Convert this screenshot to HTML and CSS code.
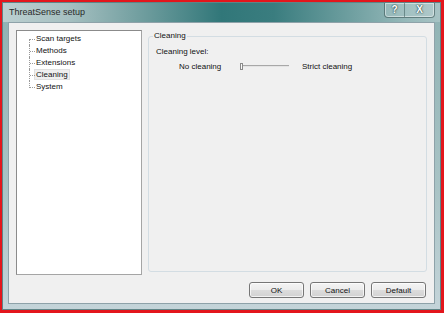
FILE: index.html
```html
<!DOCTYPE html>
<html lang="en">
<head>
    <meta charset="UTF-8">
    <title>ThreatSense setup</title>
    <link rel="stylesheet" href="styles.css">
</head>
<body>
    <div class="window">
        <div class="titlebar">
            <span class="title">ThreatSense setup</span>
            <div class="caption-btns">
                <span class="cap-btn help">?</span>
                <span class="cap-btn close">X</span>
            </div>
        </div>

        <div class="client">
            <div class="main">
                <div class="tree">
                    <ul>
                        <li>Scan targets</li>
                        <li>Methods</li>
                        <li>Extensions</li>
                        <li><span class="selected">Cleaning</span></li>
                        <li>System</li>
                    </ul>
                </div>

                <fieldset class="group">
                    <legend>Cleaning</legend>
                    <div class="field-label">Cleaning level:</div>
                    <div class="slider-row">
                        <span class="slider-min">No cleaning</span>
                        <div class="slider">
                            <span class="thumb"></span>
                            <span class="track"></span>
                        </div>
                        <span class="slider-max">Strict cleaning</span>
                    </div>
                </fieldset>
            </div>

            <div class="buttons">
                <button class="btn">OK</button>
                <button class="btn">Cancel</button>
                <button class="btn">Default</button>
            </div>
        </div>
    </div>
</body>
</html>
```

FILE: styles.css
```css
* {
    margin: 0;
    padding: 0;
    box-sizing: border-box;
    font-family: 'Liberation Sans', Arial, sans-serif;
}

body {
    background: #e3161c;
    width: 444px;
    height: 313px;
    padding: 2px 3px 3px 2px;
    overflow: hidden;
}

.window {
    width: 439px;
    height: 308px;
    display: flex;
    flex-direction: column;
    background: linear-gradient(180deg, #8fb2b3 0%, #a9c3c5 60%, #c4d4d9 100%);
    border: 1px solid #5f8486;
}

.titlebar {
    height: 19px;
    display: flex;
    align-items: flex-start;
    justify-content: space-between;
    padding-left: 6px;
    background: linear-gradient(90deg, #bccfd0 0%, #a6c0c1 15%, #6f9d9e 32%, #317779 50%, #3a7d7f 62%, #6a9c9d 78%, #95b8b9 92%, #a7c3c4 100%);
}

.title {
    font-size: 9px;
    line-height: 19px;
    color: #2a2a2a;
}

.caption-btns {
    display: flex;
    margin-right: 5px;
    border: 1px solid rgba(40, 70, 70, 0.55);
    border-top: none;
    border-radius: 0 0 4px 4px;
    box-shadow: inset 0 0 0 1px rgba(255, 255, 255, 0.45);
    background: rgba(255, 255, 255, 0.12);
}

.cap-btn {
    height: 14px;
    line-height: 13px;
    text-align: center;
    color: #fff;
    font-size: 10px;
    font-weight: bold;
    text-shadow: 0 0 2px #1d3d3e, 0 0 1px #1d3d3e;
}

.help {
    width: 20px;
    border-right: 1px solid rgba(40, 70, 70, 0.45);
}

.close {
    width: 29px;
}

.client {
    flex: 1;
    margin: 0 5px 5px 5px;
    background: #f0f0f0;
    border: 1px solid #8ea2a9;
    padding: 7px 7px 0 7px;
    display: flex;
    flex-direction: column;
}

.main {
    display: flex;
    gap: 6px;
    height: 245px;
}

.tree {
    width: 126px;
    background: #fff;
    border: 1px solid #a5a5a5;
    border-top-color: #8b8b8b;
    border-left-color: #8b8b8b;
    padding-top: 2px;
}

.tree ul {
    list-style: none;
    padding-left: 12px;
}

.tree li {
    position: relative;
    height: 12px;
    line-height: 12px;
    padding-left: 7px;
    font-size: 8px;
    color: #111;
}

.tree li::before {
    content: '';
    position: absolute;
    left: 0;
    top: 0;
    height: 12px;
    border-left: 1px dotted #9a9a9a;
}

.tree li:first-child::before {
    top: 6px;
    height: 6px;
}

.tree li:last-child::before {
    height: 7px;
}

.tree li::after {
    content: '';
    position: absolute;
    left: 1px;
    top: 6px;
    width: 5px;
    border-top: 1px dotted #9a9a9a;
}

.selected {
    display: inline-block;
    height: 11px;
    line-height: 10px;
    padding: 0 1px;
    margin-left: -2px;
    background: #efefef;
    border: 1px solid #e0e0e0;
}

.group {
    flex: 1;
    margin: 1px 0 3px 0;
    border: 1px solid #d3dde3;
    border-radius: 3px;
    padding: 0 0 0 7px;
}

.group legend {
    font-size: 8px;
    line-height: 10px;
    padding: 0 1px;
    margin-left: -3px;
    color: #111;
}

.field-label {
    font-size: 8px;
    line-height: 10px;
    margin-top: 6px;
    color: #111;
}

.slider-row {
    display: flex;
    align-items: center;
    height: 10px;
    margin-top: 4px;
    padding-left: 23px;
    font-size: 8px;
    color: #111;
}

.slider-min {
    width: 61px;
}

.slider {
    width: 49px;
    display: flex;
    align-items: center;
    margin-right: 13px;
}

.thumb {
    width: 3px;
    height: 7px;
    border: 1px solid #8a8a8a;
    background: #fafafa;
}

.track {
    flex: 1;
    height: 2px;
    border-top: 1px solid #a8a8a8;
    border-bottom: 1px solid #e4e4e4;
}

.buttons {
    display: flex;
    justify-content: flex-end;
    gap: 6px;
    margin-top: 7px;
    padding-right: 1px;
}

.btn {
    width: 55px;
    height: 16px;
    font-size: 8px;
    color: #111;
    border: 1px solid #767676;
    border-radius: 3px;
    background: linear-gradient(180deg, #f4f4f4 0%, #ececec 48%, #dcdcdc 52%, #d2d2d2 100%);
    box-shadow: inset 0 0 0 1px rgba(255, 255, 255, 0.7);
}
```
